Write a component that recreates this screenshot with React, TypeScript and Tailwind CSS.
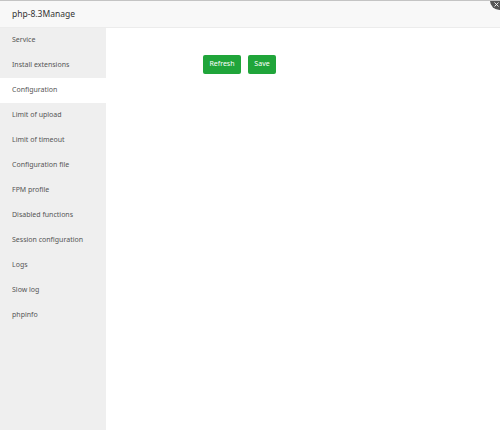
import { X } from "lucide-react";

const menu = [
  "Service",
  "Install extensions",
  "Configuration",
  "Limit of upload",
  "Limit of timeout",
  "Configuration file",
  "FPM profile",
  "Disabled functions",
  "Session configuration",
  "Logs",
  "Slow log",
  "phpinfo",
];

export default function App() {
  const active = "Configuration";

  return (
    <div className="relative flex h-[430px] w-[500px] flex-col overflow-hidden border-t border-[#c4c4c4] bg-white font-['Noto_Sans','Liberation_Sans',sans-serif]">
      {/* title bar */}
      <div className="flex h-[27px] shrink-0 items-center border-b border-[#ececec] bg-[#f8f8f8] px-3">
        <span className="text-[8.5px] text-[#333]">php-8.3Manage</span>
      </div>

      {/* close */}
      <button
        type="button"
        aria-label="close"
        className="absolute right-[-9px] top-[-10px] flex size-[19px] items-center justify-center rounded-full bg-[#555]"
      >
        <X className="ml-[-6px] mt-[7px] size-[7px] text-white" strokeWidth={3} />
      </button>

      <div className="flex min-h-0 flex-1">
        <ul className="w-[106px] shrink-0 bg-[#efefef]">
          {menu.map((m) => (
            <li
              key={m}
              className={`flex h-[25px] items-center pl-3 text-[7px] text-[#555] ${
                m === active ? "bg-white" : ""
              }`}
            >
              {m}
            </li>
          ))}
        </ul>

        <div className="flex-1">
          <div className="ml-[97px] mt-[27px] flex gap-[7px]">
            <button
              type="button"
              className="h-[19px] w-[38px] rounded-[2px] bg-[#20a53a] text-[7px] text-white"
            >
              Refresh
            </button>
            <button
              type="button"
              className="h-[19px] w-[28px] rounded-[2px] bg-[#20a53a] text-[7px] text-white"
            >
              Save
            </button>
          </div>
        </div>
      </div>
    </div>
  );
}
